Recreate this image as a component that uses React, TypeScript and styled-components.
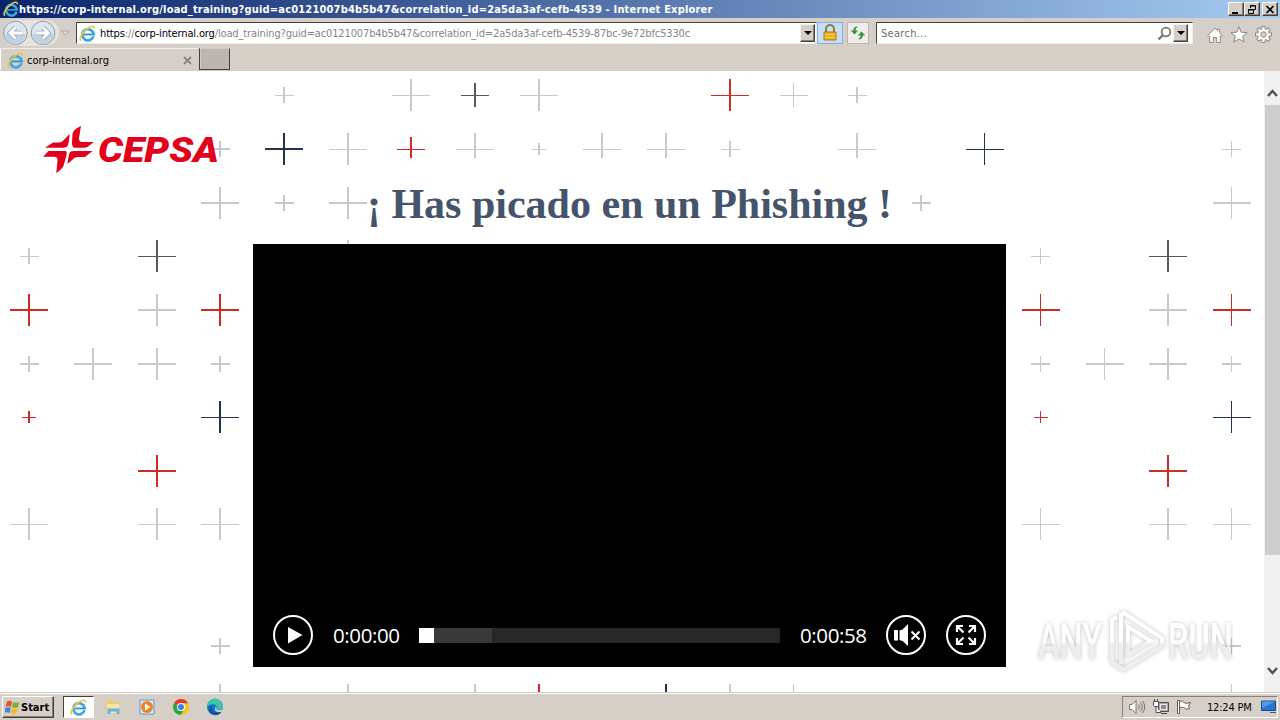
import React from 'react';
import styled, { createGlobalStyle } from 'styled-components';

const GRAY = '#c9c9c9';
const DARK = '#58585a';
const NAVY = '#22344f';
const RED = '#cf2a26';

// x, y, half width, half height, color, half height below the center
type Plus = [number, number, number, number, string, number?];

// a coordinate on .5 gives a 1px line, a whole one a 2px line
const pluses: Plus[] = [
  [284, 95.5, 9.5, 8, GRAY],
  [411, 95.5, 19, 16, GRAY],
  [475, 95.5, 14, 12, DARK],
  [539, 95.5, 19, 16, GRAY],
  [730, 95.5, 19, 16, RED],
  [793.5, 95.5, 14, 12, GRAY],
  [857, 95.5, 9.5, 8, GRAY],
  [220, 149, 9.5, 8, GRAY],
  [284, 149, 19, 16, NAVY],
  [348, 149.5, 19, 16, GRAY],
  [411, 149.5, 14, 12, RED, 9],
  [475, 149.5, 19, 16, GRAY, 9],
  [539, 149.5, 7, 6, GRAY],
  [602, 149.5, 19, 16, GRAY, 9],
  [666, 149.5, 19, 16, GRAY, 9],
  [730, 149.5, 9.5, 8, GRAY],
  [857, 149.5, 19, 16, GRAY, 9],
  [984.5, 149.5, 19, 16, NAVY],
  [1231.5, 149.5, 9.5, 8, GRAY],
  [220, 203, 19, 16, GRAY],
  [284, 203, 9.5, 8, GRAY],
  [348, 203, 19, 16, GRAY],
  [921, 203, 9.5, 8, GRAY],
  [1231.5, 203, 19, 16, GRAY],
  [348, 256.5, 19, 16, GRAY],
  [220, 646, 9.5, 8, GRAY],
  [1231.5, 646, 9.5, 8, GRAY],
  [220, 700, 19, 16, GRAY],
  [348, 700, 19, 16, GRAY],
  [475, 700, 19, 16, GRAY],
  [539, 700, 19, 16, RED],
  [666, 700, 19, 16, NAVY],
  [730, 700, 19, 16, GRAY],
  [793.5, 700, 19, 16, GRAY],
  [1231.5, 700, 19, 16, GRAY],
];

// this block repeats on both sides of the video
const sideBlock: Plus[] = [
  [29, 256.5, 9.5, 8, GRAY],
  [157, 256.5, 19, 16, DARK],
  [29, 310, 19, 16, RED],
  [157, 310, 19, 16, GRAY],
  [220, 310, 19, 16, RED],
  [29, 364, 9.5, 8, GRAY],
  [93, 364, 19, 16, GRAY],
  [157, 364, 19, 16, GRAY],
  [220, 364, 9.5, 8, GRAY],
  [29, 417.5, 7, 6, RED],
  [220, 417.5, 19, 16, NAVY],
  [157, 471, 19, 16, RED],
  [29, 524.5, 19, 16, GRAY],
  [157, 524.5, 19, 16, GRAY],
  [220, 524.5, 19, 16, GRAY],
];

const allPluses = [
  ...pluses,
  ...sideBlock,
  ...sideBlock.map(([x, y, w, h, c]): Plus => [x + (x === 157 ? 1011 : 1011.5), y, w, h, c]),
];

const lineWidth = (n: number) => (n % 1 ? 1 : 2);

const IeIcon = ({ size = 17 }: { size?: number }) => (
  <svg width={size} height={size} viewBox="0 0 16 16">
    <path
      d="M13.600 10.600A5.300 5.300 0 1 1 13.700 8.300"
      fill="none"
      stroke="#3ba7e4"
      strokeWidth="2.600"
    />
    <path d="M4.500 8.900h10.600" stroke="#2d98d8" strokeWidth="1.800" />
    <path
      d="M1.900 14.700C-.6 12.600 3.600 5.800 8.900 2.600c3-1.800 5.700-2 5.500.8"
      fill="none"
      stroke="#efc83c"
      strokeWidth="1.600"
    />
  </svg>
);

function App() {
  return (
    <Screen>
      <GlobalStyle />
      <TitleBar>
        <IeIcon size={16} />
        <TitleText>
          https://corp-internal.org/load_training?guid=ac0121007b4b5b47&amp;correlation_id=2a5da3af-cefb-4539 - Internet Explorer
        </TitleText>
        <WindowButton>
          <svg width="10" height="9"><path d="M1 7h6v2H1z" /></svg>
        </WindowButton>
        <WindowButton>
          <svg width="10" height="9" fill="none" stroke="#000">
            <path d="M3.500 3V.5h5v4H7M3 1h6M1.500 4.500h5v4h-5zM1 5h6" />
          </svg>
        </WindowButton>
        <WindowButton $gap>
          <svg width="10" height="9"><path d="M1.500 1l7 7m0-7l-7 7" stroke="#000" strokeWidth="1.700" /></svg>
        </WindowButton>
      </TitleBar>

      <AddressRow>
        <NavButtons>
          <svg width="74" height="28" viewBox="0 0 74 28">
            <path d="M15 .8h28c12 0 16 6 16 13.200S53 27 43 27H15C0 27 0 .8 15 .8z" fill="#e6e3df" />
            <circle cx="15.500" cy="14" r="11.800" fill="#dce6ee" stroke="#8d9aa6" />
            <circle cx="43" cy="14" r="11.800" fill="#dce6ee" stroke="#8d9aa6" />
            <path d="M5 15a10.500 10.500 0 0 0 21 0zM32.500 15a10.500 10.500 0 0 0 21 0z" fill="#bfd3e2" />
            <path d="M22 14H10m5.500-5.500L10 14l5.500 5.500M36.500 14h12M43 8.500l5.500 5.500L43 19.500" fill="none" stroke="#9babb8" strokeWidth="4.600" />
            <path d="M22 14H10m5.500-5.500L10 14l5.500 5.500M36.500 14h12M43 8.500l5.500 5.500L43 19.500" fill="none" stroke="#fff" strokeWidth="2.800" />
            <path d="M61.500 12h8l-4 4.500z" fill="#ddd9d5" stroke="#aaa5a0" />
          </svg>
        </NavButtons>
        <Field $width={741}>
          <IeIcon />
          <Url>
            <b>https</b>://<b>corp-internal.org</b>/load_training?guid=ac0121007b4b5b47&amp;correlation_id=2a5da3af-cefb-4539-87bc-9e72bfc5330c
          </Url>
          <DropButton />
        </Field>
        <ToolButton $active>
          <svg width="16" height="18" viewBox="0 0 16 18">
            <path d="M4 8V5a4 4 0 0 1 8 0v3" fill="none" stroke="#9b7a2b" strokeWidth="2" />
            <path d="M2 8h12v8H2z" fill="#edae1c" stroke="#b17b12" />
            <path d="M3 10.500h10M3 13.500h10" stroke="#f8d25f" />
          </svg>
        </ToolButton>
        <ToolButton>
          <svg width="16" height="16" viewBox="0 0 16 16" fill="#2e962e">
            <path d="M7.500 1.500C4.500 1.500 3.500 3 3.300 5.500H.8L4.500 9.500 8 5.500H5.500C5.500 3.500 6 2.800 7.500 2.500z" />
            <path d="M8.500 14.500c3 0 4-1.500 4.200-4h2.500L11.500 6.500 8 10.500h2.500c0 2-.5 2.700-2 3z" />
          </svg>
        </ToolButton>
        <Field $width={317}>
          <SearchHint>Search...</SearchHint>
          <svg width="15" height="15" viewBox="0 0 15 15" fill="none" stroke="#777">
            <circle cx="9" cy="6" r="4.300" strokeWidth="1.800" />
            <path d="M6 9L1.500 13.500" strokeWidth="2.400" />
          </svg>
          <DropButton $inset />
        </Field>
        <PageTools>
          <svg width="16" height="16" viewBox="0 0 16 16" fill="#fff" stroke="#8d8883">
            <path d="M.8 8.300L8 1l2.500 2.500V2h2v3.500l2.700 2.800-1.200 1.200-.7-.6v6.600H9.700v-5H6.300v5H2.700V8.900l-.7.600z" />
          </svg>
          <svg width="18" height="17" viewBox="0 0 18 17" fill="#fff" stroke="#8d8883">
            <path d="M9 .8l2.200 5.400 5.900.4-4.500 3.700 1.500 5.700L9 12.900 3.900 16l1.500-5.700L.9 6.600l5.900-.4z" />
          </svg>
          <svg width="17" height="17" viewBox="0 0 17 17">
            <g stroke="#8d8883" strokeWidth="4">
              <path d="M8.500 0v17M0 8.500h17M2.500 2.500l12 12M14.500 2.500l-12 12" />
            </g>
            <circle cx="8.500" cy="8.500" r="6.300" fill="#8d8883" />
            <path d="M8.500 1v15M1 8.500h15M3.200 3.200l10.600 10.600M13.800 3.200L3.200 13.800" stroke="#fff" strokeWidth="2.200" />
            <circle cx="8.500" cy="8.500" r="5.400" fill="#fff" />
            <circle cx="8.500" cy="8.500" r="2.700" fill="#d6cfc8" stroke="#8d8883" />
          </svg>
        </PageTools>
      </AddressRow>

      <TabRow>
        <Tab>
          <IeIcon />
          <TabText>corp-internal.org</TabText>
          <svg width="9" height="9"><path d="M1 1l7 7m0-7L1 8" stroke="#89837f" strokeWidth="1.800" /></svg>
        </Tab>
        <NewTab />
      </TabRow>

      <Viewport>
        <Page>
          <Backdrop width="1264" height="621" viewBox="0 71 1264 621" shapeRendering="crispEdges">
            {allPluses.map(([x, y, w, , c], i) => (
              <path key={i} d={`M${x - w} ${y}h${w * 2}`} stroke={c} strokeWidth={lineWidth(y)} />
            ))}
            {allPluses.map(([x, y, , h, c, below = h], i) => (
              <path key={i} d={`M${x} ${Math.floor(y) - h}v${h + below}`} stroke={c} strokeWidth={lineWidth(x)} />
            ))}
          </Backdrop>
          <Logo width="180" height="50" viewBox="0 0 180 50">
            <g fill="#e2001a">
              <path d="M2 22.800L10 17.500H16C21 17.500 23 11 26.800 9.500L25.500 18C25 22 23 22.800 19 22.800z" />
              <path d="M38 1L36 13C35.800 15.500 37 17 39 17H50.800L45.500 21.300C44 22.600 42 22.800 40 22.800H32C29.500 22.800 29 20 29 17L29.500 9C30.500 5 34 3 38 1z" />
              <path d="M0 31.800L5.500 26H22C24 26 24 28 23.500 30L20.500 41C19.500 43.500 16 46 13.300 48L14.500 35C14.800 32.500 13 31.800 11 31.800z" />
              <path d="M49.500 26L42 32H35C30.500 32 29 36.500 24.300 38.500L25.800 30.500C26.500 26.500 28 26 32 26z" />
            </g>
            <LogoText x="55" y="37" textLength="121" lengthAdjust="spacingAndGlyphs">CEPSA</LogoText>
          </Logo>
          <Heading>¡ Has picado en un Phishing !</Heading>
          <Player>
            <svg width="40" height="40" viewBox="0 0 40 40">
              <circle cx="20" cy="20" r="19" fill="none" stroke="#fff" strokeWidth="2" />
              <path d="M15 12l14.500 8L15 28.500z" fill="#fff" />
            </svg>
            <Time>0:00:00</Time>
            <Track>
              <Thumb />
              <Buffered />
            </Track>
            <Time>0:00:58</Time>
            <svg width="40" height="40" viewBox="0 0 40 40">
              <circle cx="20" cy="20" r="19" fill="none" stroke="#fff" strokeWidth="2" />
              <path d="M8 15h4v10.500H8zM13.500 15.500l3-1L22 9v22l-5.500-5-3-1z" fill="#fff" />
              <path d="M25.500 16.500l8 8m0-8l-8 8" stroke="#fff" strokeWidth="2" />
            </svg>
            <svg width="40" height="40" viewBox="0 0 40 40" fill="none" stroke="#fff" strokeWidth="2.200">
              <circle cx="20" cy="20" r="19" strokeWidth="2" />
              <path d="M17.500 17.500L11 11m0 6v-6h6M22.500 17.500L29 11m-6 0h6v6M17.500 22.500L11 29m0-6v6h6M22.500 22.500L29 29m-6 0h6v-6" />
            </svg>
          </Player>
          <Watermark width="234" height="80" viewBox="0 0 234 80">
            <defs>
              <linearGradient id="fade" x1="0" y1="0" x2="0" y2="1">
                <stop offset=".5" stopColor="#fff" />
                <stop offset=".55" stopColor="#ececec" />
              </linearGradient>
            </defs>
            <WatermarkText transform="translate(8 59) scale(.65 1)">ANY</WatermarkText>
            <WatermarkText transform="translate(138 59) scale(.65 1)">RUN</WatermarkText>
            <path
              d="M87 17L82 20V62L93 69.500L132 46V38L94 13L91 15V64M98 27v28l23-14z"
              fill="none"
              stroke="url(#fade)"
              strokeWidth="4"
            />
          </Watermark>
        </Page>
        <Scrollbar>
          <Arrow width="16" height="34" viewBox="0 0 16 34"><path d="M4 25l4.500-5 4.500 5" /></Arrow>
          <ScrollThumb />
          <Arrow width="16" height="34" viewBox="0 0 16 34"><path d="M4 10l4.500 5 4.500-5" /></Arrow>
        </Scrollbar>
      </Viewport>

      <Taskbar>
        <StartButton>
          <svg width="15" height="16" viewBox="0 0 15 16">
            <path d="M2 2.500c2-1 3.500-1 5.300.2L6 8C4 7 2.500 7 .5 8z" fill="#e7572c" />
            <path d="M8.300 3c2 1 3.500 1 6 0L13 8.200c-2.300 1-4 1-6 .1z" fill="#77b42d" />
            <path d="M.3 9c2-1 3.500-1 5.500 0l-1.300 5c-2-1-3.500-1-5 0z" fill="#4189d6" />
            <path d="M6.800 9.300c2 1 3.700 1 6 0l-1.300 5c-2.300 1-4 1-6 0z" fill="#f5b82a" />
          </svg>
          Start
        </StartButton>
        <TaskItem $active><IeIcon /></TaskItem>
        <TaskItem>
          <svg width="18" height="18" viewBox="0 0 18 18">
            <path d="M2 2.500h6l1 1.500h6v11H2z" fill="#e8cd72" />
            <path d="M3 6h12v9H3z" fill="#f7e6a2" />
            <path d="M3.500 16v-5.500h12V16h-3v-2.500h-6V16z" fill="#66b4df" />
          </svg>
        </TaskItem>
        <TaskItem>
          <svg width="18" height="18" viewBox="0 0 18 18">
            <path d="M2 2h14v14H2z" fill="#d8e9f7" stroke="#5b9bd5" />
            <circle cx="9" cy="9" r="6" fill="#f08418" />
            <path d="M7 5.500L12.500 9 7 12.500z" fill="#fff" />
          </svg>
        </TaskItem>
        <TaskItem>
          <svg width="18" height="18" viewBox="0 0 18 18">
            <circle cx="9" cy="9" r="8" fill="#fbc116" />
            <path d="M9 9L2.100 5A8 8 0 0 1 16 5.200H9z" fill="#e33b2e" />
            <path d="M2.100 5A8 8 0 0 0 8.600 17L12.300 11 9 9z" fill="#2ba24c" />
            <circle cx="9" cy="9" r="4" fill="#fff" />
            <circle cx="9" cy="9" r="3" fill="#3b7ded" />
          </svg>
        </TaskItem>
        <TaskItem>
          <svg width="18" height="18" viewBox="0 0 18 18">
            <circle cx="9" cy="9" r="8" fill="#1674c4" />
            <path d="M1 9A8 8 0 0 1 17 8c0 4-5 4.500-6.500 3C12 8 9 6 6.500 6.200 3.500 6.300 1.500 8 1 9z" fill="#3cc4a5" />
            <path d="M6 8c-1 3 1 7 6 6.500 2 0 3-.5 4-1.500-2 5-9 5.500-12 1.500C2 12 4 8.500 6 8z" fill="#12529f" />
            <path d="M9.500 8.500c1.500 1 .5 2 1 2.700 1.500 1.500 4.500 1.300 6.500-.7l-1 3c-2 1-5.500 1-7-1.500z" fill="#d6cfc8" />
          </svg>
        </TaskItem>
        <Tray>
          <svg width="18" height="16" viewBox="0 0 18 16" fill="none" stroke="#77726d">
            <path d="M1.500 5.500h2.500l4-4v13l-4-4H1.500z" fill="#fff" />
            <path d="M10.500 5.500q2 2.500 0 5M12.500 3.500q3.500 4.500 0 9M14.500 2q4.500 6 0 12" />
          </svg>
          <svg width="18" height="16" viewBox="0 0 18 16" fill="#fff" stroke="#55504c">
            <path d="M6.500 3.500h10v9h-10z" fill="#aaa" />
            <path d="M8.500 5.500h6v5h-6z" fill="#8e8a87" stroke="#eee" />
            <path d="M1.500 2.500h5v4l-1 1h-3l-1-1zM2.500 0v2M5.500 0v2M4 8v5.500h5M9 14.500h6" />
          </svg>
          <svg width="18" height="16" viewBox="0 0 18 16" fill="#fff" stroke="#625d59">
            <path d="M1.500 1.500h2v13h-2z" />
            <path d="M3.500 2.500c3-1 4 0 5 1.500 2 .5 4 0 6-.5l-2 3.500 1 2.500c-2 1-4 .5-5-.5-1-1-3-1-5 0z" />
          </svg>
          <Clock>12:24 PM</Clock>
          <svg width="16" height="14" viewBox="0 0 16 14">
            <path d="M.5 1h14v9.500H.500z" fill="#2875d0" stroke="#164a94" />
            <path d="M1 1.500h13L1 8z" fill="#559be7" />
            <path d="M9 12.500h6" stroke="#555" />
          </svg>
        </Tray>
      </Taskbar>
    </Screen>
  );
}

export default App;

const GlobalStyle = createGlobalStyle`
  body {
    margin: 0;
    overflow: hidden;
  }

  svg {
    display: block;
    flex-shrink: 0;
  }
`;

const Screen = styled.div`
  display: flex;
  flex-direction: column;
  width: 1280px;
  height: 720px;
  box-sizing: border-box;
  background: #d6cfc8;
  font-family: 'DejaVu Sans Condensed', 'DejaVu Sans', sans-serif;
  font-size: 11px;
  white-space: nowrap;
`;

const TitleBar = styled.div`
  display: flex;
  align-items: center;
  height: 18px;
  box-sizing: border-box;
  padding: 0 2px 0 3px;
  background: linear-gradient(90deg, #0a246a, #a6caf0);
`;

const TitleText = styled.div`
  flex: 1;
  color: #fff;
  font-weight: bold;
  letter-spacing: 0.18px;
`;

const WindowButton = styled.div<{ $gap?: boolean }>`
  display: flex;
  align-items: center;
  justify-content: center;
  width: 16px;
  height: 14px;
  box-sizing: border-box;
  margin-left: ${({ $gap }) => ($gap ? '2px' : '0')};
  background: #d6cfc8;
  border: 1px solid;
  border-color: #fff #404040 #404040 #fff;
  box-shadow: inset -1px -1px #87817b;
`;

const AddressRow = styled.div`
  display: flex;
  align-items: flex-start;
  height: 30px;
  box-sizing: border-box;
  padding-top: 4px;
`;

const NavButtons = styled.div`
  width: 76px;
  height: 28px;
  margin-top: -3px;
`;

const Field = styled.div<{ $width: number }>`
  display: flex;
  align-items: center;
  width: ${({ $width }) => $width}px;
  height: 22px;
  box-sizing: border-box;
  background: #fff;
  border: 1px solid;
  border-color: #404040 #efecea #efecea #404040;
  padding-left: 2px;
`;

const Url = styled.div`
  flex: 1;
  margin-left: 4px;
  color: #858585;
  letter-spacing: -0.14px;

  b {
    font-weight: normal;
    color: #000;
  }
`;

const SearchHint = styled.div`
  flex: 1;
  margin-left: 2px;
  color: #6d6d6d;
  letter-spacing: 0.3px;
`;

const DropButton = styled.div<{ $inset?: boolean }>`
  display: flex;
  align-items: center;
  justify-content: center;
  width: 15px;
  height: 18px;
  box-sizing: border-box;
  margin-left: 1px;
  margin-right: ${({ $inset }) => ($inset ? '4px' : '1px')};
  background: #d6cfc8;
  border: 1px solid;
  border-color: #f4f2f0 #404040 #404040 #f4f2f0;
  box-shadow: inset -1px -1px #87817b;

  &::after {
    content: '';
    border: 4px solid transparent;
    border-top-color: #000;
    border-bottom: 0;
  }
`;

const ToolButton = styled.div<{ $active?: boolean }>`
  display: flex;
  align-items: center;
  justify-content: center;
  width: ${({ $active }) => ($active ? 26 : 22)}px;
  height: 22px;
  box-sizing: border-box;
  margin-left: ${({ $active }) => ($active ? 0 : 4)}px;
  margin-right: ${({ $active }) => ($active ? 0 : 7)}px;
  border: 1px solid ${({ $active }) => ($active ? '#7eaee5' : '#bbb6b1')};
  background: ${({ $active }) => ($active ? '#c6def6' : '#efedeb')};
`;

const PageTools = styled.div`
  display: flex;
  gap: 7px;
  align-items: center;
  margin: 4px 0 0 14px;
`;

const TabRow = styled.div`
  display: flex;
  height: 23px;
  box-sizing: border-box;
  border-bottom: 1px solid #d0cbc5;
`;

const Tab = styled.div`
  display: flex;
  align-items: center;
  width: 198px;
  box-sizing: border-box;
  padding: 1px 6px 0;
  border-left: 1px solid #fff;
  border-top: 1px solid #f0edea;
`;

const TabText = styled.div`
  flex: 1;
  margin-left: 3px;
  letter-spacing: -0.05px;
`;

const NewTab = styled.div`
  width: 31px;
  height: 22px;
  box-sizing: border-box;
  margin-left: 1px;
  background: #bdb6b0;
  border: 1px solid #404040;
  border-top-color: #d0cac5;
  box-shadow: inset 1px 0 #d0cac5;
`;

const Viewport = styled.div`
  display: flex;
  height: 621px;
`;

const Page = styled.div`
  position: relative;
  width: 1264px;
  height: 621px;
  box-sizing: border-box;
  padding-top: 54px;
  background: #fff;
  overflow: hidden;
`;

const Backdrop = styled.svg`
  position: absolute;
  left: 0;
  top: 0;
`;

const Logo = styled.svg`
  position: relative;
  margin-left: 43px;
`;

const LogoText = styled.text`
  font-family: Roboto, sans-serif;
  font-size: 35px;
  font-weight: 900;
  font-style: italic;
  fill: #e2001a;
`;

const Heading = styled.h1`
  position: relative;
  width: 1259px;
  height: 49px;
  margin: 5px 0 15px;
  color: #44546a;
  font-family: 'Liberation Serif', serif;
  font-size: 42px;
  line-height: 49px;
  text-align: center;
`;

const Player = styled.div`
  position: relative;
  display: flex;
  align-items: flex-end;
  gap: 20px;
  width: 753px;
  height: 423px;
  box-sizing: border-box;
  margin-left: 253px;
  padding: 0 20px 12px;
  background: #000;
`;

const Time = styled.div`
  width: 66px;
  height: 40px;
  color: #fff;
  font-family: 'Open Sans', sans-serif;
  font-size: 20.5px;
  letter-spacing: -0.4px;
  line-height: 41px;
`;

const Track = styled.div`
  display: flex;
  flex: 1;
  height: 15px;
  margin-bottom: 12px;
  background: #272727;
`;

const Thumb = styled.div`
  width: 15px;
  background: #fff;
`;

const Buffered = styled.div`
  width: 58px;
  background: #393939;
`;

const Watermark = styled.svg`
  position: absolute;
  left: 1030px;
  top: 529px;
  overflow: visible;
  filter: drop-shadow(0 0 2px rgba(0, 0, 0, 0.3));
  opacity: 0.85;
`;

const WatermarkText = styled.text`
  font-family: Roboto, sans-serif;
  font-size: 50px;
  font-weight: 500;
  fill: url(#fade);
`;

const Scrollbar = styled.div`
  display: flex;
  flex-direction: column;
  width: 16px;
  background: #f0f0f0;
`;

const Arrow = styled.svg`
  fill: none;
  stroke: #505050;
  stroke-width: 2.4px;
`;

const ScrollThumb = styled.div`
  height: 450px;
  margin: 0 0 103px 1px;
  background: #cdcdcd;
`;

const Taskbar = styled.div`
  display: flex;
  align-items: center;
  height: 28px;
  box-sizing: border-box;
  padding: 1px 2px 0;
  border-top: 1px solid #cbc8c0;
  box-shadow: inset 0 1px #fff;
`;

const StartButton = styled.div`
  display: flex;
  align-items: center;
  gap: 1px;
  width: 52px;
  height: 22px;
  box-sizing: border-box;
  padding-left: 2px;
  border: 1px solid;
  border-color: #fff #404040 #404040 #fff;
  box-shadow: inset -1px -1px #87817b;
  font-weight: bold;
  margin-right: 9px;
`;

const TaskItem = styled.div<{ $active?: boolean }>`
  display: flex;
  align-items: center;
  justify-content: center;
  width: ${({ $active }) => ($active ? 31 : 34)}px;
  height: 22px;
  box-sizing: border-box;
  margin-right: ${({ $active }) => ($active ? '2px' : '0')};
  background: ${({ $active }) => ($active ? '#fff' : 'none')};
  border: ${({ $active }) => ($active ? '1px solid' : '0')};
  border-color: #404040 #fff #fff #404040;
`;

const Tray = styled.div`
  display: flex;
  align-items: center;
  gap: 6px;
  width: 156px;
  height: 22px;
  box-sizing: border-box;
  margin-left: auto;
  padding-left: 5px;
  border: 1px solid;
  border-color: #87817b #fff #fff #87817b;
`;

const Clock = styled.div`
  flex: 1;
  margin-left: 7px;
  letter-spacing: -0.2px;
`;
